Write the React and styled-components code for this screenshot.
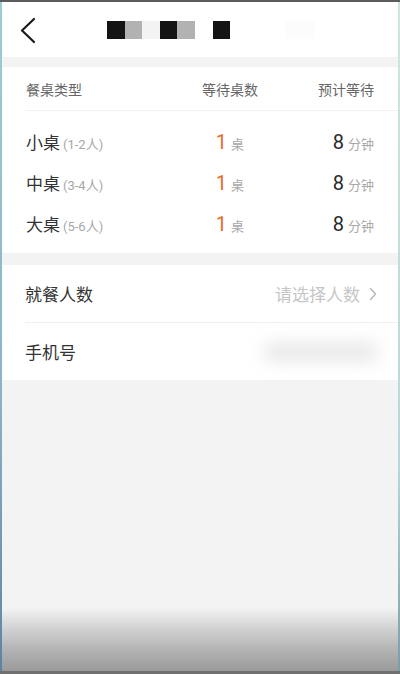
import React from "react";
import styled, { createGlobalStyle } from "styled-components";

const Global = createGlobalStyle`
  html, body { margin: 0; padding: 0; background: #f3f3f3; }
  body { font-family: "Roboto", "Noto Sans CJK SC", sans-serif; }
  * { box-sizing: border-box; }
`;

const Frame = styled.div`
  width: 400px;
  height: 674px;
  display: flex;
  flex-direction: column;
  overflow: hidden;
`;

const TopLine = styled.div`
  height: 2px;
  background: #5c5c5c;
  flex: none;
`;

const BottomLine = styled.div`
  height: 3px;
  background: #707070;
  flex: none;
`;

const Body = styled.div`
  flex: 1;
  display: flex;
  min-height: 0;
`;

const Edge = styled.div`
  width: 2px;
  flex: none;
  background: ${(p) =>
    p.$side === "left"
      ? "linear-gradient(to bottom, #9ccdd3 0%, #86b4c4 60%, #5a84a6 100%)"
      : "linear-gradient(to bottom, #cfe5e2 0%, #b9d6d6 70%, #7a9ca8 100%)"};
`;

const Screen = styled.div`
  flex: 1;
  display: flex;
  flex-direction: column;
  background: #f3f3f3;
  min-width: 0;
`;

const Header = styled.header`
  height: 55px;
  flex: none;
  background: #fff;
  display: flex;
  align-items: center;
  padding-left: 14px;
`;

const BackButton = styled.div`
  width: 22px;
  height: 28px;
  display: flex;
  align-items: center;
  justify-content: center;
  margin-top: 1px;
`;

const TitleBlocks = styled.div`
  display: flex;
  margin-left: 69px;
  margin-top: 1px;
`;

const Block = styled.div`
  width: ${(p) => p.$w || 17.6}px;
  height: 18px;
  background: ${(p) => p.$c};
`;

const Gap = styled.div`
  height: ${(p) => p.$h}px;
  flex: none;
`;

const Card = styled.section`
  background: #fff;
  flex: none;
`;

const TableCard = styled(Card)`
  padding: 0 0 9px 24px;
`;

const Grid = styled.div`
  display: grid;
  grid-template-columns: 1fr 100px 94px;
  padding-right: 24px;
  align-items: center;
`;

const HeadRow = styled(Grid)`
  height: 44px;
  border-bottom: 1px solid #f1f1f1;
  margin-bottom: 10px;
  font-size: 14px;
  color: #666;
  padding-top: 1px;
`;

const DataRow = styled(Grid)`
  height: 41px;
`;

const Cell = styled.div`
  text-align: ${(p) => p.$align || "left"};
  white-space: nowrap;
`;

const Name = styled.span`
  font-size: 17px;
  color: #333;
`;

const Sub = styled.span`
  font-size: 13px;
  color: #a8a8a8;
  margin-left: 3px;
`;

const Num = styled.span`
  font-family: "Roboto", sans-serif;
  font-weight: 400;
  font-size: 20px;
  color: ${(p) => (p.$accent ? "#e8692c" : "#2a2a2a")};
`;

const Unit = styled.span`
  font-size: 13px;
  color: #a8a8a8;
  margin-left: 4px;
`;

const FormCard = styled(Card)`
  padding-left: 23px;
`;

const FormRow = styled.div`
  height: ${(p) => p.$h}px;
  display: flex;
  align-items: center;
  justify-content: space-between;
  padding-right: 21px;
  border-bottom: ${(p) => (p.$line ? "1px solid #f0f0f0" : "none")};
`;

const Label = styled.span`
  font-size: 17px;
  color: #333;
`;

const Placeholder = styled.span`
  display: flex;
  align-items: center;
  gap: 9px;
  font-size: 17px;
  color: #c6c6c6;
`;

const BlurredValue = styled.div`
  width: 116px;
  height: 22px;
  margin-right: -2px;
  background: #e4e4e4;
  border-radius: 11px;
  filter: blur(8px);
  opacity: 0.75;
`;

const Filler = styled.div`
  flex: 1;
`;

const BottomShade = styled.div`
  height: 63px;
  flex: none;
  background: linear-gradient(to bottom, #f3f3f3 0%, #d4d4d4 30%, #b4b4b4 65%, #9a9a9a 100%);
`;

const rows = [
  { name: "小桌", range: "(1-2人)" },
  { name: "中桌", range: "(3-4人)" },
  { name: "大桌", range: "(5-6人)" },
];

export default function App() {
  return (
    <>
      <Global />
      <Frame>
        <TopLine />
        <Body>
          <Edge $side="left" />
          <Screen>
            <Header>
              <BackButton>
                <svg width="17" height="27" viewBox="0 0 17 27">
                  <path d="M15 2 L3 13.5 L15 25" fill="none" stroke="#1a1a1a" strokeWidth="2.2" strokeLinecap="round" strokeLinejoin="round" />
                </svg>
              </BackButton>
              <TitleBlocks>
                <Block $c="#141414" />
                <Block $c="#b2b2b2" />
                <Block $c="#f3f3f3" />
                <Block $c="#141414" />
                <Block $c="#b2b2b2" />
                <Block $c="#ffffff" />
                <Block $c="#141414" />
                <Block $c="#ffffff" $w={55} />
                <Block $c="#fcfcfc" $w={30} />
              </TitleBlocks>
            </Header>
            <Gap $h={10} />
            <TableCard>
              <HeadRow>
                <Cell>餐桌类型</Cell>
                <Cell $align="center">等待桌数</Cell>
                <Cell $align="right">预计等待</Cell>
              </HeadRow>
              {rows.map((r) => (
                <DataRow key={r.name}>
                  <Cell>
                    <Name>{r.name}</Name>
                    <Sub>{r.range}</Sub>
                  </Cell>
                  <Cell $align="center">
                    <Num $accent>1</Num>
                    <Unit>桌</Unit>
                  </Cell>
                  <Cell $align="right">
                    <Num>8</Num>
                    <Unit>分钟</Unit>
                  </Cell>
                </DataRow>
              ))}
            </TableCard>
            <Gap $h={12} />
            <FormCard>
              <FormRow $h={58} $line>
                <Label>就餐人数</Label>
                <Placeholder>
                  请选择人数
                  <svg width="8" height="14" viewBox="0 0 8 14">
                    <path d="M1.5 1.5 L6.5 7 L1.5 12.5" fill="none" stroke="#b8b8b8" strokeWidth="1.5" strokeLinecap="round" strokeLinejoin="round" />
                  </svg>
                </Placeholder>
              </FormRow>
              <FormRow $h={57}>
                <Label>手机号</Label>
                <BlurredValue />
              </FormRow>
            </FormCard>
            <Filler />
            <BottomShade />
          </Screen>
          <Edge $side="right" />
        </Body>
        <BottomLine />
      </Frame>
    </>
  );
}
